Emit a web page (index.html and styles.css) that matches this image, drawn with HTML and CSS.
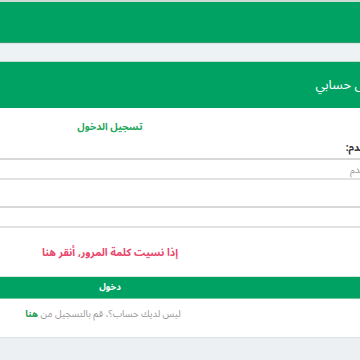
FILE: index.html
```html
<!DOCTYPE html>
<html lang="ar">
<head>
<meta charset="utf-8">
<title>تسجيل الدخول</title>
<link rel="stylesheet" href="styles.css">
</head>
<body>
<div class="page" dir="rtl">
  <header class="topbar"></header>
  <div class="strip"></div>
  <section class="panel">
    <div class="panel-head"><span class="panel-title">تسجيل الدخول إلى حسابي</span></div>
    <div class="panel-body">
      <h2 class="title center">تسجيل الدخول</h2>
      <div class="group">
        <label class="label" for="u">اسم المستخدم:</label>
        <input class="field" id="u" type="text" placeholder="اسم المستخدم">
      </div>
      <div class="group">
        <label class="label" for="p">كلمة المرور:</label>
        <input class="field" id="p" type="password">
      </div>
      <a class="forgot center" href="#">إذا نسيت كلمة المرور, أنقر هنا</a>
      <button class="btn" type="button"><span class="btn-label">دخول</span></button>
      <p class="signup center">ليس لديك حساب؟، قم بالتسجيل من <a class="here" href="#">هنا</a></p>
    </div>
  </section>
  <footer class="foot"></footer>
</div>
</body>
</html>
```
FILE: styles.css
```css
html, body {
  margin: 0;
  padding: 0;
  overflow: hidden;
  background: #ffffff;
}
body {
  width: 360px;
  height: 360px;
  font-family: "Noto Sans Arabic", "Noto Kufi Arabic", "DejaVu Sans", sans-serif;
}
.page {
  width: 460px;
  direction: rtl;
}
.topbar {
  box-sizing: border-box;
  height: 43px;
  background: #00a264;
  border-top: 2px solid #cddbd4;
  border-bottom: 1px solid #2e9e6c;
}
.strip {
  box-sizing: border-box;
  height: 19px;
  background: #edf2f5;
  border-top: 1px solid #dde4e8;
  border-bottom: 1px solid #bfe0cf;
}
.panel-head {
  box-sizing: border-box;
  height: 46px;
  background: #00a264;
  color: #ffffff;
  display: flex;
  align-items: center;
  padding-right: 9px;
}
.panel-title {
  font-size: 13px;
}
.panel-body {
  display: flex;
  flex-direction: column;
  padding: 11px 0 15px;
  border-bottom: 1px solid #dfe3e6;
}
.center {
  width: 220px;
  margin-inline-start: auto;
  text-align: center;
}
.title {
  margin-top: 0;
  margin-bottom: 5px;
  font-size: 10px;
  line-height: 16px;
  font-weight: bold;
  color: #25a75c;
}
.group {
  display: flex;
  flex-direction: column;
  margin-bottom: 8px;
}
.label {
  font-size: 10px;
  line-height: 16px;
  font-weight: bold;
  color: #333333;
  padding-right: 46px;
  margin-bottom: 2px;
}
.field {
  box-sizing: border-box;
  height: 22px;
  border: 0;
  border-top: 2px solid #d8d8d8;
  border-bottom: 2px solid #e2e2e2;
  padding: 0 52px 0 0;
  font-family: inherit;
  font-size: 10px;
  color: #555;
  background: #ffffff;
  outline: none;
}
.field::placeholder {
  color: #9c9c9c;
}
.forgot {
  margin-top: 9px;
  font-size: 10.5px;
  line-height: 16px;
  font-weight: bold;
  color: #e9466c;
  text-decoration: none;
}
.btn {
  margin-top: 15px;
  height: 23px;
  padding: 0;
  border: 0;
  border-top: 1px solid #d6e6dd;
  border-bottom: 1px solid #6cc79a;
  background: #00a264;
  color: #ffffff;
  font-family: inherit;
  font-size: 9px;
  font-weight: bold;
}
.btn-label {
  display: block;
  width: 220px;
  margin-inline-start: auto;
  text-align: center;
}
.signup {
  margin: 7px 0 0;
  margin-inline-start: auto;
  padding-right: 14px;
  box-sizing: border-box;
  font-size: 9.5px;
  line-height: 16px;
  color: #9a9a9a;
}
.here {
  color: #2a9d5a;
  font-weight: bold;
  text-decoration: none;
}
.foot {
  height: 30px;
  background: #ecf0f3;
}
```
